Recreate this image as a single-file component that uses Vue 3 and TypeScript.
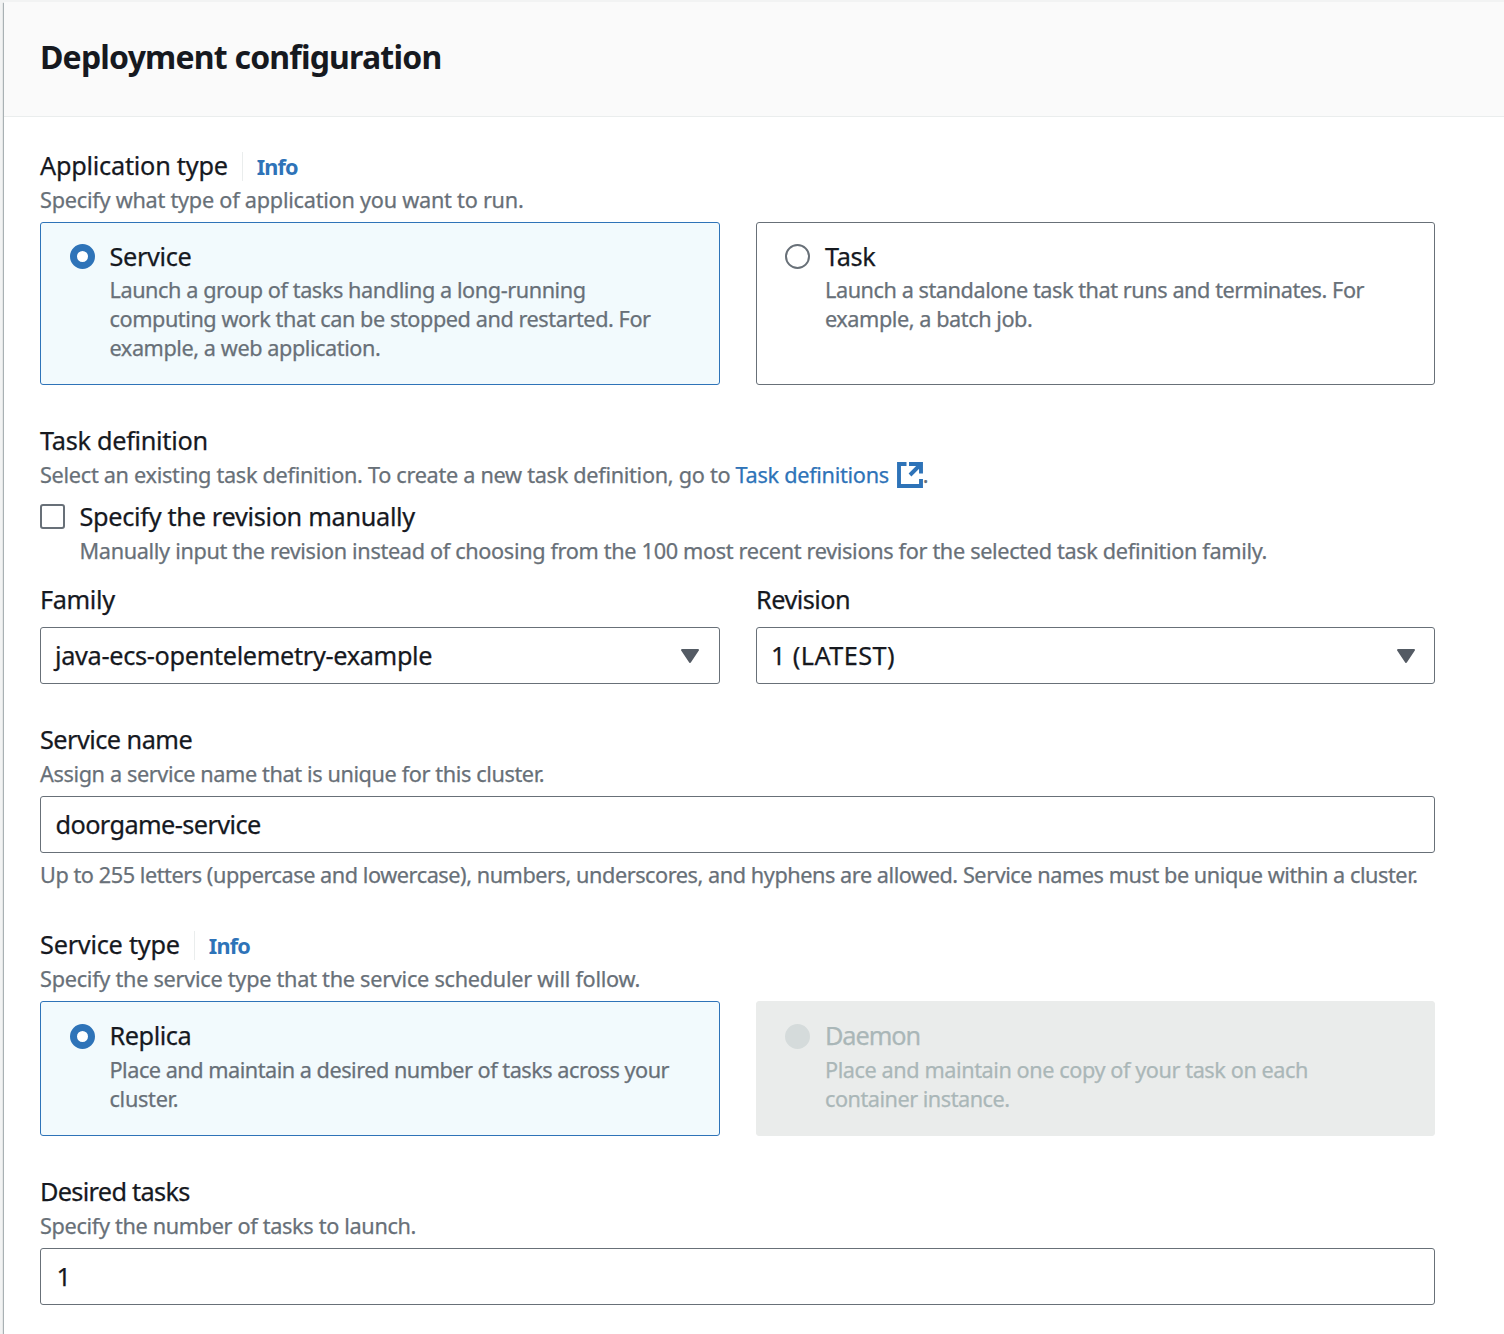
<script setup lang="ts">
import { ref } from 'vue'

const applicationType = ref<'service' | 'task'>('service')
const serviceType = ref<'replica' | 'daemon'>('replica')
const manualRevision = ref(false)
const family = 'java-ecs-opentelemetry-example'
const revision = '1 (LATEST)'
const serviceName = 'doorgame-service'
const desiredTasks = '1'
</script>

<template>
  <div class="page">
    <section class="panel">
      <header class="panel-header">
        <h2>Deployment configuration</h2>
      </header>
      <div class="panel-body">
        <div class="field">
          <div class="label-row">
            <span class="label ls-25">Application type</span>
            <a class="info">Info</a>
          </div>
          <p class="hint ls-25">Specify what type of application you want to run.</p>
          <div class="tiles">
            <div class="tile" :class="{ selected: applicationType === 'service' }" @click="applicationType = 'service'">
              <span class="radio"></span>
              <div class="tile-text">
                <div class="label ls-37">Service</div>
                <p class="desc ls-44">Launch a group of tasks handling a long-running<br />computing work that can be stopped and restarted. For<br />example, a web application.</p>
              </div>
            </div>
            <div class="tile" :class="{ selected: applicationType === 'task' }" @click="applicationType = 'task'">
              <span class="radio"></span>
              <div class="tile-text">
                <div class="label ls-37">Task</div>
                <p class="desc ls-45">Launch a standalone task that runs and terminates. For<br />example, a batch job.</p>
              </div>
            </div>
          </div>
        </div>

        <div class="field">
          <div class="label ls-30">Task definition</div>
          <p class="hint ls-30">Select an existing task definition. To create a new task definition, go to <a class="link">Task definitions
            <svg class="external" viewBox="0 0 26 26" width="26" height="26"><path d="M9.5 2H2v22h22v-7M12 2h12v9.5M23 3L13 13" /></svg></a><span class="stop">.</span></p>
          <div class="check-row" @click="manualRevision = !manualRevision">
            <span class="checkbox" :class="{ checked: manualRevision }"></span>
            <div>
              <div class="label ls-32">Specify the revision manually</div>
              <p class="hint ls-34">Manually input the revision instead of choosing from the 100 most recent revisions for the selected task definition family.</p>
            </div>
          </div>
          <div class="selects">
            <div class="select-col">
              <div class="label ls-37">Family</div>
              <div class="control">
                <span class="ls-34">{{ family }}</span>
                <svg class="caret" viewBox="0 0 20 16" width="20" height="16"><path d="M2 2h16l-8 12z" /></svg>
              </div>
            </div>
            <div class="select-col">
              <div class="label ls-55">Revision</div>
              <div class="control">
                <span class="wide">{{ revision }}</span>
                <svg class="caret" viewBox="0 0 20 16" width="20" height="16"><path d="M2 2h16l-8 12z" /></svg>
              </div>
            </div>
          </div>
        </div>

        <div class="field">
          <div class="label ls-55">Service name</div>
          <p class="hint ls-39">Assign a service name that is unique for this cluster.</p>
          <div class="control input"><span class="ls-60">{{ serviceName }}</span></div>
          <p class="constraint ls-45">Up to 255 letters (uppercase and lowercase), numbers, underscores, and hyphens are allowed. Service names must be unique within a cluster.</p>
        </div>

        <div class="field">
          <div class="label-row">
            <span class="label ls-25">Service type</span>
            <a class="info">Info</a>
          </div>
          <p class="hint ls-27">Specify the service type that the service scheduler will follow.</p>
          <div class="tiles short">
            <div class="tile" :class="{ selected: serviceType === 'replica' }">
              <span class="radio"></span>
              <div class="tile-text">
                <div class="label ls-45">Replica</div>
                <p class="desc ls-50">Place and maintain a desired number of tasks across your<br /><span class="ls-30">cluster.</span></p>
              </div>
            </div>
            <div class="tile disabled">
              <span class="radio"></span>
              <div class="tile-text">
                <div class="label ls-110">Daemon</div>
                <p class="desc ls-43">Place and maintain one copy of your task on each<br /><span class="ls-50">container instance.</span></p>
              </div>
            </div>
          </div>
        </div>

        <div class="field">
          <div class="label ls-70">Desired tasks</div>
          <p class="hint ls-34">Specify the number of tasks to launch.</p>
          <div class="control input"><span class="count">{{ desiredTasks }}</span></div>
        </div>
      </div>
    </section>
  </div>
</template>

<style>
body {
  background: #f2f3f3;
  overflow: hidden;
}
</style>

<style scoped>
.page {
  box-sizing: border-box;
  height: 1334px;
  padding: 2px 0 0 4px;
  overflow: hidden;
  font-family: "Noto Sans", "Open Sans", sans-serif;
  color: #16191f;
  -webkit-text-stroke: 0.25px currentColor;
}
.panel {
  height: 1400px;
  background: #fff;
  box-shadow: -1px 1px 1px rgba(0, 28, 36, 0.3);
}
.panel-header {
  box-sizing: border-box;
  height: 115px;
  padding: 33px 36px 0;
  background: #fafafa;
  border-bottom: 1px solid #eaeded;
}
h2 {
  margin: 0;
  font-size: 32px;
  line-height: 44px;
  font-weight: 700;
  letter-spacing: -0.8px;
  -webkit-text-stroke: 0;
}
.panel-body {
  width: 1395px;
  padding: 30px 0 0 36px;
}
p {
  margin: 0;
}
.field {
  margin-bottom: 37px;
  white-space: nowrap;
}
.label {
  font-size: 25.3px;
  line-height: 36px;
}
.label-row {
  display: flex;
  align-items: center;
  height: 36px;
}
.info {
  margin-left: 14px;
  padding-left: 14px;
  border-left: 1px solid #eaeded;
  font-size: 21.7px;
  line-height: 29px;
  font-weight: 700;
  letter-spacing: -0.85px;
  color: #2e73b8;
  -webkit-text-stroke: 0;
  margin-top: 2px;
}
.hint,
.constraint,
.desc {
  font-size: 21.7px;
  line-height: 29px;
  color: #687078;
}
.hint {
  height: 29px;
  margin-top: 2px;
}
.link {
  color: #2e73b8;
}
.external {
  margin-left: 2.5px;
  vertical-align: -5px;
  fill: none;
  stroke: #2e73b8;
  stroke-width: 3.9;
}
.tiles {
  display: grid;
  grid-template-columns: 680px 679px;
  gap: 36px;
  margin-top: 8px;
}
.tile {
  box-sizing: border-box;
  display: flex;
  padding: 15px 20px 22px 28px;
  border: 1px solid #687078;
  border-radius: 3px;
}
.tile:first-child {
  padding-left: 29px;
}
.desc {
  margin-top: 1px;
}
.short .desc {
  margin-top: 2px;
}
.tile.selected {
  background: #f2fafd;
  border-color: #2e73b8;
}
.radio {
  box-sizing: border-box;
  flex: none;
  width: 25px;
  height: 25px;
  margin: 6px 15px 0 0;
  border: 2px solid #687078;
  border-radius: 50%;
  background: #fff;
}
.tile:first-child .radio {
  margin-right: 14.5px;
}
.short .radio {
  margin-top: 7px;
}
.selected .radio {
  border: 7.5px solid #2e73b8;
}
.tile.disabled {
  background: #eaeceb;
  border-color: #eaeceb;
}
.disabled .radio {
  background: #d5dbdb;
  border-color: #d5dbdb;
}
.disabled .label,
.disabled .desc {
  color: #aab7b8;
}
.check-row {
  display: flex;
  margin-top: 9px;
}
.checkbox {
  box-sizing: border-box;
  flex: none;
  width: 25px;
  height: 25px;
  margin: 6px 14.5px 0 0;
  border: 2px solid #687078;
  border-radius: 3px;
}
.checkbox.checked {
  background: #2e73b8;
}
.selects {
  display: grid;
  grid-template-columns: 680px 679px;
  gap: 36px;
  margin-top: 16px;
}
.control {
  box-sizing: border-box;
  display: flex;
  align-items: center;
  justify-content: space-between;
  height: 57px;
  margin-top: 10px;
  padding: 0 19.5px 2px 14px;
  border: 1px solid #687078;
  border-radius: 3px;
  font-size: 25.3px;
  line-height: 36px;
}
.select-col:last-child .control {
  padding-right: 18.5px;
}
.control.input {
  margin-top: 8px;
  padding-left: 14.5px;
}
.count {
  padding-left: 1px;
}
.caret {
  margin-top: 2px;
  fill: #545b64;
  stroke: #545b64;
  stroke-width: 2;
  stroke-linejoin: round;
}
.constraint {
  margin-top: 7px;
}
.ls-25 { letter-spacing: -0.25px; }
.ls-27 { letter-spacing: -0.27px; }
.ls-30 { letter-spacing: -0.3px; }
.ls-32 { letter-spacing: -0.32px; }
.ls-34 { letter-spacing: -0.34px; }
.ls-37 { letter-spacing: -0.37px; }
.ls-39 { letter-spacing: -0.39px; }
.ls-43 { letter-spacing: -0.43px; }
.ls-44 { letter-spacing: -0.44px; }
.ls-45 { letter-spacing: -0.45px; }
.ls-50 { letter-spacing: -0.5px; }
.ls-55 { letter-spacing: -0.55px; }
.ls-60 { letter-spacing: -0.6px; }
.ls-70 { letter-spacing: -0.7px; }
.ls-110 { letter-spacing: -1.1px; }
.wide { letter-spacing: 0.4px; }
</style>
